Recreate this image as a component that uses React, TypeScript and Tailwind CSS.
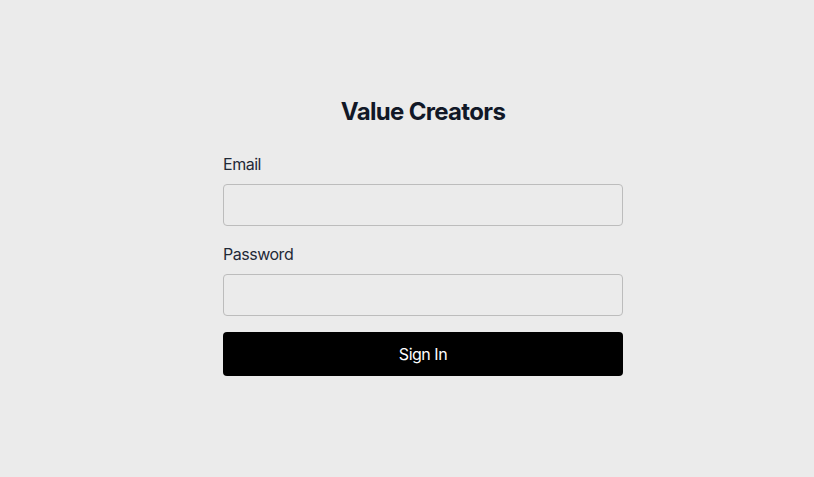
export default function App() {
  return (
    <div className="min-h-screen w-full bg-[#ebebeb] flex justify-center pl-8 pt-[96px]" style={{ fontFamily: "Inter, 'Noto Sans', sans-serif" }}>
      <div className="w-[400px]">
        <h1 className="text-2xl leading-8 font-bold text-center text-[#111827] tracking-[-0.028em] mb-6">Value Creators</h1>
        <form className="flex flex-col gap-4" onSubmit={(e) => e.preventDefault()}>
          <div>
            <label className="block text-base leading-6 text-[#1f2937] tracking-[-0.03em] mb-2">Email</label>
            <input type="email" className="block w-full h-[42px] rounded border border-[#bcbcbc] bg-transparent px-3 outline-none" />
          </div>
          <div>
            <label className="block text-base leading-6 text-[#1f2937] tracking-[-0.03em] mb-2">Password</label>
            <input type="password" className="block w-full h-[42px] rounded border border-[#bcbcbc] bg-transparent px-3 outline-none" />
          </div>
          <button type="submit" className="w-full h-11 rounded bg-black text-white text-base tracking-[-0.03em]">Sign In</button>
        </form>
      </div>
    </div>
  );
}
